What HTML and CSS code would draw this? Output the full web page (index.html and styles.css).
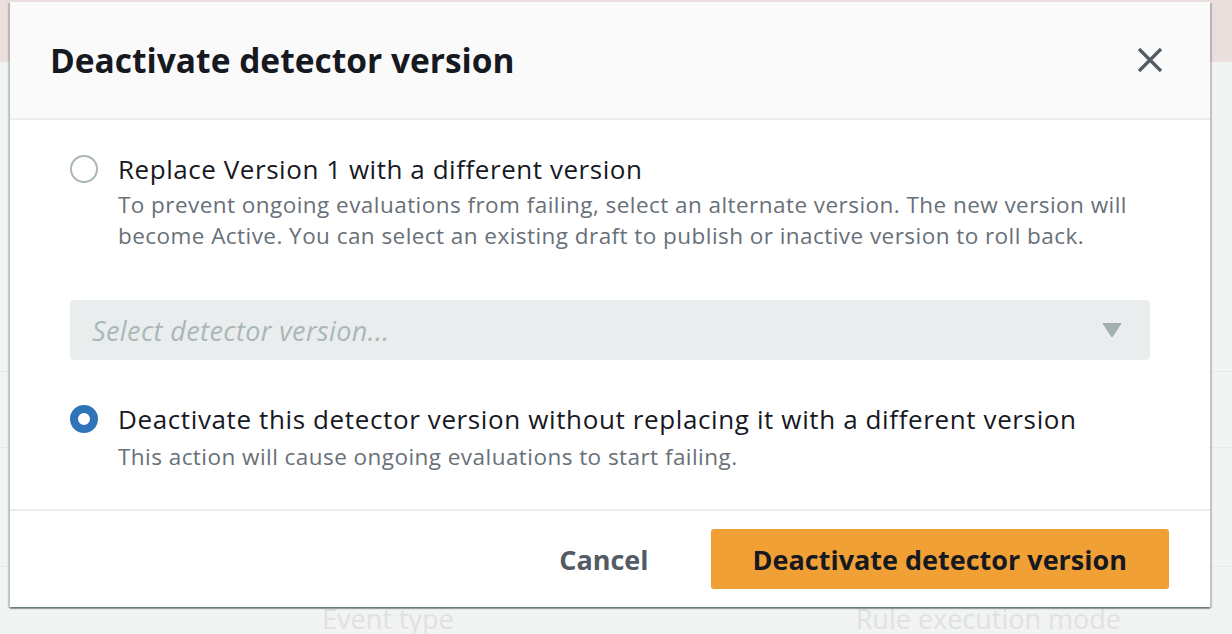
FILE: index.html
```html
<!DOCTYPE html>
<html lang="en">
<head>
<meta charset="utf-8">
<title>Deactivate detector version</title>
<link rel="stylesheet" href="styles.css">
</head>
<body>
<div class="page">
  <div class="banner"></div>
  <div class="bg-row bg-row-1"></div>
  <div class="bg-row bg-row-2"></div>
  <div class="bg-row bg-row-3"></div>
  <div class="bg-fields">
    <span class="bg-field bg-field-1">Event type</span>
    <span class="bg-field bg-field-2">Rule execution mode</span>
  </div>
</div>

<div class="modal" role="dialog" aria-labelledby="modal-title">
  <div class="modal-header">
    <h2 class="modal-title" id="modal-title">Deactivate detector version</h2>
    <button class="close-btn" aria-label="Close">
      <svg width="26" height="26" viewBox="0 0 26 26"><path d="M2 2 L24 24 M24 2 L2 24" stroke="#545b64" stroke-width="3.2" fill="none"/></svg>
    </button>
  </div>
  <div class="modal-body">
    <div class="option">
      <span class="radio"></span>
      <div class="option-text">
        <div class="option-label">Replace Version 1 with a different version</div>
        <div class="option-desc">To prevent ongoing evaluations from failing, select an alternate version. The new version will<br>become Active. You can select an existing draft to publish or inactive version to roll back.</div>
      </div>
    </div>
    <div class="select">
      <span class="select-placeholder">Select detector version...</span>
      <svg class="select-caret" width="20" height="16" viewBox="0 0 20 16"><path d="M1.5 1 H18.5 Q19.6 1 19 2.2 L11 14.6 Q10 16 9 14.6 L1 2.2 Q0.4 1 1.5 1 Z" fill="#a3afaf"/></svg>
    </div>
    <div class="option option-2">
      <span class="radio radio-checked"></span>
      <div class="option-text">
        <div class="option-label label-long">Deactivate this detector version without replacing it with a different version</div>
        <div class="option-desc">This action will cause ongoing evaluations to start failing.</div>
      </div>
    </div>
  </div>
  <div class="modal-footer">
    <button class="btn-link">Cancel</button>
    <button class="btn-primary">Deactivate detector version</button>
  </div>
</div>
</body>
</html>
```
FILE: styles.css
```css
html, body {
  margin: 0;
  padding: 0;
}
body {
  width: 1232px;
  height: 634px;
  overflow: hidden;
  background: #f2f3f3;
  font-family: "Open Sans", Roboto, sans-serif;
  position: relative;
}

/* background page (dimmed) */
.page {
  display: flex;
  flex-direction: column;
  height: 634px;
}
.banner {
  height: 62px;
  flex: none;
  background: #ebdfdd;
}
.bg-row {
  flex: none;
  border-bottom: 1px solid #e8eaea;
}
.bg-row-1 { height: 309px; }
.bg-row-2 { height: 75px; }
.bg-row-3 { height: 118px; }
.bg-fields {
  flex: 1;
  display: flex;
  align-items: flex-end;
  color: #e0e2e2;
  font-size: 27px;
  line-height: 26px;
  padding-bottom: 2px;
}
.bg-field-1 { margin-left: 322px; }
.bg-field-2 { margin-left: 402px; }

/* modal */
.modal {
  position: absolute;
  left: 10px;
  top: 2px;
  width: 1200px;
  background: #ffffff;
  box-shadow: 0 2px 1px rgba(0, 28, 36, 0.35), 2px 1px 1px rgba(0, 28, 36, 0.18), -2px 1px 1px rgba(0, 28, 36, 0.18);
  color: #16191f;
}
.modal-header {
  height: 116px;
  background: #fafafa;
  border-bottom: 2px solid #eaeded;
  display: flex;
  align-items: center;
  justify-content: space-between;
  padding: 0 47px 0 40px;
}
.modal-title {
  margin: 0;
  font-size: 33.5px;
  font-weight: 700;
  color: #16191f;
}
.close-btn {
  border: none;
  background: none;
  padding: 0;
  width: 26px;
  height: 26px;
  display: flex;
}

.modal-body {
  padding: 31px 60px 37px;
  border-bottom: 2px solid #eaeded;
}
.option {
  display: flex;
  align-items: flex-start;
  gap: 20px;
}
.radio {
  flex: none;
  width: 28px;
  height: 28px;
  box-sizing: border-box;
  border-radius: 50%;
  border: 2px solid #aab7b8;
  background: #ffffff;
  margin-top: 4px;
}
.radio-checked {
  border: 8px solid #2f73b8;
}
.option-label {
  font-size: 26px;
  letter-spacing: 0.55px;
  line-height: 36px;
  color: #16191f;
}
.label-long {
  letter-spacing: 0.62px;
}
.option-desc {
  margin-top: 2px;
  font-size: 22.5px;
  letter-spacing: 0.45px;
  line-height: 31px;
  color: #687078;
}

.select {
  margin-top: 49px;
  height: 60px;
  background: #eaeded;
  border-radius: 4px;
  display: flex;
  align-items: center;
  justify-content: space-between;
  padding: 0 28px 0 22px;
}
.select-placeholder {
  font-size: 27px;
  letter-spacing: 0.4px;
  font-style: italic;
  color: #aab7b8;
}
.option-2 {
  margin-top: 41px;
}
.option-2 .option-desc {
  margin-top: 4px;
}

.modal-footer {
  display: flex;
  justify-content: flex-end;
  align-items: center;
  padding: 18px 41px 18px;
}
.btn-link {
  border: none;
  background: none;
  padding: 0;
  margin-right: 62px;
  font-family: inherit;
  font-size: 27px;
  font-weight: 700;
  color: #545b64;
}
.btn-primary {
  border: none;
  border-radius: 3px;
  background: #f0a035;
  height: 60px;
  padding: 0 42px;
  font-family: inherit;
  font-size: 27px;
  font-weight: 700;
  color: #16191f;
}
```
